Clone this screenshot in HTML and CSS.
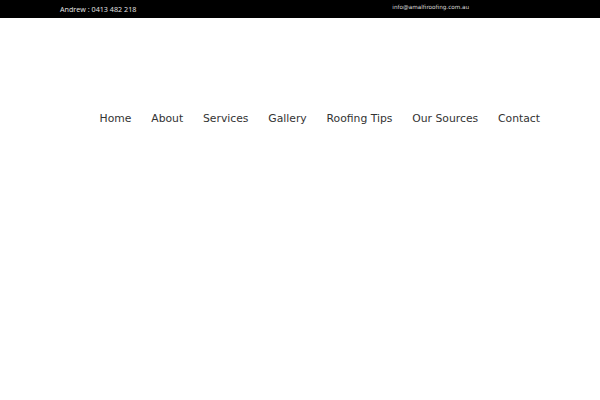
FILE: index.html
```html
<!DOCTYPE html>
<html>
<head>
<meta charset="utf-8">
<link rel="stylesheet" href="styles.css">
</head>
<body>
<div class="topbar">
  <span class="phone">Andrew : 0413 482 218</span>
  <span class="email">info@amalfiroofing.com.au</span>
</div>
<header class="header">
  <nav class="nav">
    <a href="#">Home</a>
    <a href="#">About</a>
    <a href="#">Services</a>
    <a href="#">Gallery</a>
    <a href="#">Roofing Tips</a>
    <a href="#">Our Sources</a>
    <a href="#">Contact</a>
  </nav>
</header>
</body>
</html>
```
FILE: styles.css
```css
html, body { margin: 0; padding: 0; background: #fff; }
body { font-family: "DejaVu Sans", sans-serif; }
.topbar {
  background: #000;
  height: 18px;
  display: flex;
  align-items: flex-start;
  padding: 0 0 0 60px;
  color: #e6e6e6;
}
.phone {
  font-family: "Open Sans", sans-serif;
  font-size: 7.2px;
  line-height: 18px;
}
.email {
  font-family: "DejaVu Sans", sans-serif;
  font-size: 5.7px;
  line-height: 15px;
  margin-left: 256px;
  color: #ddd;
}
.header {
  display: flex;
  justify-content: flex-end;
  padding: 92px 60px 0 0;
}
.nav { display: flex; gap: 19.8px; }
.nav a {
  color: #333;
  text-decoration: none;
  font-size: 10.8px;
  line-height: 18px;
}
```
